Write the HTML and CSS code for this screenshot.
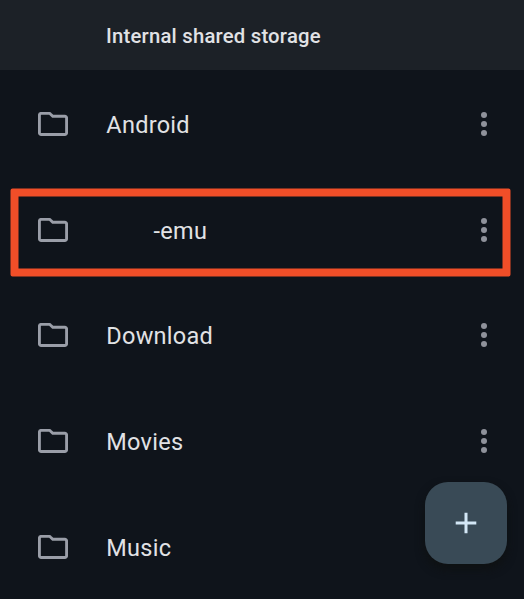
FILE: index.html
```html
<!DOCTYPE html>
<html lang="en">
<head>
<meta charset="utf-8">
<title>Internal shared storage</title>
<link rel="stylesheet" href="styles.css">
</head>
<body>
<svg class="symbols" aria-hidden="true">
  <symbol id="folder" viewBox="0 0 30 24">
    <path d="M3.2 1.4H11a2 2 0 0 1 1.4.6l2.4 2.3h12a1.8 1.8 0 0 1 1.8 1.8V20.7a1.8 1.8 0 0 1-1.8 1.8H3.2a1.8 1.8 0 0 1-1.8-1.8V3.2a1.8 1.8 0 0 1 1.8-1.8Z" fill="none" stroke="currentColor" stroke-width="2.9"/>
  </symbol>
  <symbol id="more" viewBox="0 0 6 24">
    <circle cx="3" cy="3" r="3"/><circle cx="3" cy="12" r="3"/><circle cx="3" cy="21" r="3"/>
  </symbol>
</svg>
<header class="header"><h1 class="title">Internal shared storage</h1></header>
<main class="list">
  <div class="row"><svg class="folder"><use href="#folder"/></svg><span class="name">Android</span><svg class="more"><use href="#more"/></svg></div>
  <div class="row"><svg class="folder"><use href="#folder"/></svg><span class="name suffix">-emu</span><svg class="more"><use href="#more"/></svg>
    <svg class="highlight" viewBox="0 0 502 90"><path fill="currentColor" fill-rule="evenodd" d="M2.5.5h496a2 2 0 0 1 2 2v84a2 2 0 0 1-2 2H2.500a2 2 0 0 1-2-2v-84a2 2 0 0 1 2-2ZM8.500 8.500v72h484v-72Z"/></svg>
  </div>
  <div class="row"><svg class="folder"><use href="#folder"/></svg><span class="name">Download</span><svg class="more"><use href="#more"/></svg></div>
  <div class="row"><svg class="folder"><use href="#folder"/></svg><span class="name">Movies</span><svg class="more"><use href="#more"/></svg></div>
  <div class="row"><svg class="folder"><use href="#folder"/></svg><span class="name">Music</span></div>
</main>
<button class="fab" aria-label="Add"><svg class="plus" viewBox="0 0 22 22"><path d="M11 .7v20.600M.7 11h20.600" stroke="currentColor" stroke-width="3"/></svg></button>
</body>
</html>
```
FILE: styles.css
```css
* {
  box-sizing: border-box;
}

body {
  margin: 0;
  height: 599px;
  overflow: hidden;
  position: relative;
  background: #0f141b;
  color: #e1e2e5;
  font-family: Roboto, "Liberation Sans", sans-serif;
}

.symbols {
  position: absolute;
  width: 0;
  height: 0;
}

.header {
  height: 70px;
  padding: 2px 0 0 106px;
  display: flex;
  align-items: center;
  background: #1c2127;
}

.title {
  margin: 0;
  font-size: 20.3px;
  font-weight: 500;
  line-height: 24px;
  letter-spacing: 0.22px;
}

.list {
  padding-top: 1px;
}

.row {
  position: relative;
  height: 105.8px;
  padding: 0 37px 0 38px;
  display: flex;
  align-items: center;
}

.folder {
  width: 30px;
  height: 24px;
  margin-right: 38.3px;
  flex: none;
  color: #9a9ea8;
}

.name {
  flex: 1;
  padding-top: 2px;
  font-size: 23.5px;
  line-height: 28px;
  letter-spacing: 0.27px;
}

.suffix {
  padding-left: 47.3px;
}

.more {
  width: 6px;
  height: 24px;
  flex: none;
  fill: #8f929b;
}

.highlight {
  position: absolute;
  left: 10px;
  top: 11.2px;
  width: 502px;
  height: 90px;
  color: #f04e28;
}

.fab {
  position: absolute;
  left: 425px;
  top: 482px;
  width: 82px;
  height: 82px;
  padding: 0;
  border: 0;
  border-radius: 23px;
  display: grid;
  place-items: center;
  background: #394a56;
  color: #d3e7f6;
  box-shadow: 0 5px 10px rgba(14, 17, 17, 0.9);
}

.plus {
  width: 22px;
  height: 22px;
}
```
